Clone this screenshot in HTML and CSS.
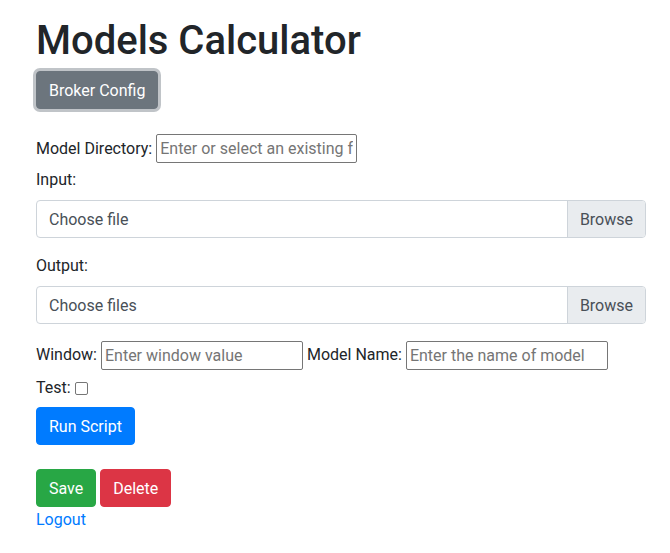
FILE: index.html
```html
<!DOCTYPE html>
<html lang="en">
<head>
<meta charset="utf-8">
<title>Models Calculator</title>
<link rel="stylesheet" href="styles.css">
</head>
<body>
<div class="page">
  <h1 class="title">Models Calculator</h1>
  <button class="btn btn-secondary focus" type="button">Broker Config</button>

  <form class="calc">
    <div class="inline-row dir-row">
      <label>Model Directory:</label>
      <input class="plain" type="text" placeholder="Enter or select an existing folder">
    </div>

    <div class="form-group">
      <label class="block-label">Input:</label>
      <div class="custom-file">
        <span class="file-label">Choose file</span>
        <span class="file-btn">Browse</span>
      </div>
    </div>

    <div class="form-group">
      <label class="block-label">Output:</label>
      <div class="custom-file">
        <span class="file-label">Choose files</span>
        <span class="file-btn">Browse</span>
      </div>
    </div>

    <div class="inline-row win-row">
      <label>Window:</label>
      <input class="plain" type="text" placeholder="Enter window value">
      <label>Model Name:</label>
      <input class="plain" type="text" placeholder="Enter the name of model">
    </div>

    <div class="inline-row test-row">
      <label>Test:</label>
      <span class="check"></span>
    </div>

    <div class="run-row">
      <button class="btn btn-primary" type="button">Run Script</button>
    </div>
  </form>

  <div class="actions">
    <button class="btn btn-success" type="button">Save</button>
    <button class="btn btn-danger" type="button">Delete</button>
  </div>
  <a class="logout" href="#">Logout</a>
</div>
</body>
</html>
```

FILE: styles.css
```css
* { box-sizing: border-box; }

body {
  margin: 0;
  font-family: Roboto, "Liberation Sans", sans-serif;
  font-size: 16px;
  line-height: 1.5;
  color: #212529;
  background: #fff;
}

.page {
  padding: 17px 24px 0 36px;
}

.title {
  margin: 0 0 6px;
  font-size: 40px;
  font-weight: 500;
  line-height: 1.2;
}

.btn {
  display: inline-block;
  font-family: inherit;
  font-size: 16px;
  font-weight: 400;
  line-height: 1.5;
  padding: 7px 12px 5px;
  border: 1px solid transparent;
  border-radius: 4px;
  color: #fff;
  cursor: pointer;
}

.btn-secondary { background: #6c757d; border-color: #6c757d; }
.btn-secondary.focus { box-shadow: 0 0 0 3px rgba(130, 138, 145, 0.5); }
.btn-primary { background: #007bff; border-color: #007bff; }
.btn-success { background: #28a745; border-color: #28a745; }
.btn-danger { background: #dc3545; border-color: #dc3545; }

.calc {
  margin-top: 25px;
}

.inline-row {
  display: flex;
  align-items: center;
  gap: 4px;
}

.inline-row label { white-space: nowrap; }

.plain {
  font-family: inherit;
  font-size: 16px;
  height: 29px;
  width: 202px;
  padding: 1px 3px;
  border: 1px solid #767676;
  border-radius: 2px;
  color: #212529;
}

.plain::placeholder { color: #757575; }

.dir-row { height: 29px; margin-bottom: 5px; }
.dir-row .plain { width: 201px; }

.form-group { margin-bottom: 16px; }

.block-label {
  display: block;
  margin-bottom: 8px;
}

.custom-file {
  display: flex;
  height: 38px;
  border: 1px solid #ced4da;
  border-radius: 4px;
  color: #495057;
  overflow: hidden;
}

.file-label {
  flex: 1;
  padding: 7px 12px 5px;
}

.file-btn {
  padding: 7px 12px 5px;
  background: #e9ecef;
  border-left: 1px solid #ced4da;
}

.win-row { height: 30px; }

.test-row {
  margin-top: 6px;
  height: 24px;
}

.check {
  width: 13px;
  height: 13px;
  margin-top: 1px;
  border: 1px solid #767676;
  border-radius: 2px;
  background: #fff;
}

.run-row { margin-top: 7px; }

.actions {
  display: flex;
  gap: 4px;
  margin-top: 24px;
}

.logout {
  display: inline-block;
  padding-top: 1px;
  color: #007bff;
  text-decoration: none;
}
```
